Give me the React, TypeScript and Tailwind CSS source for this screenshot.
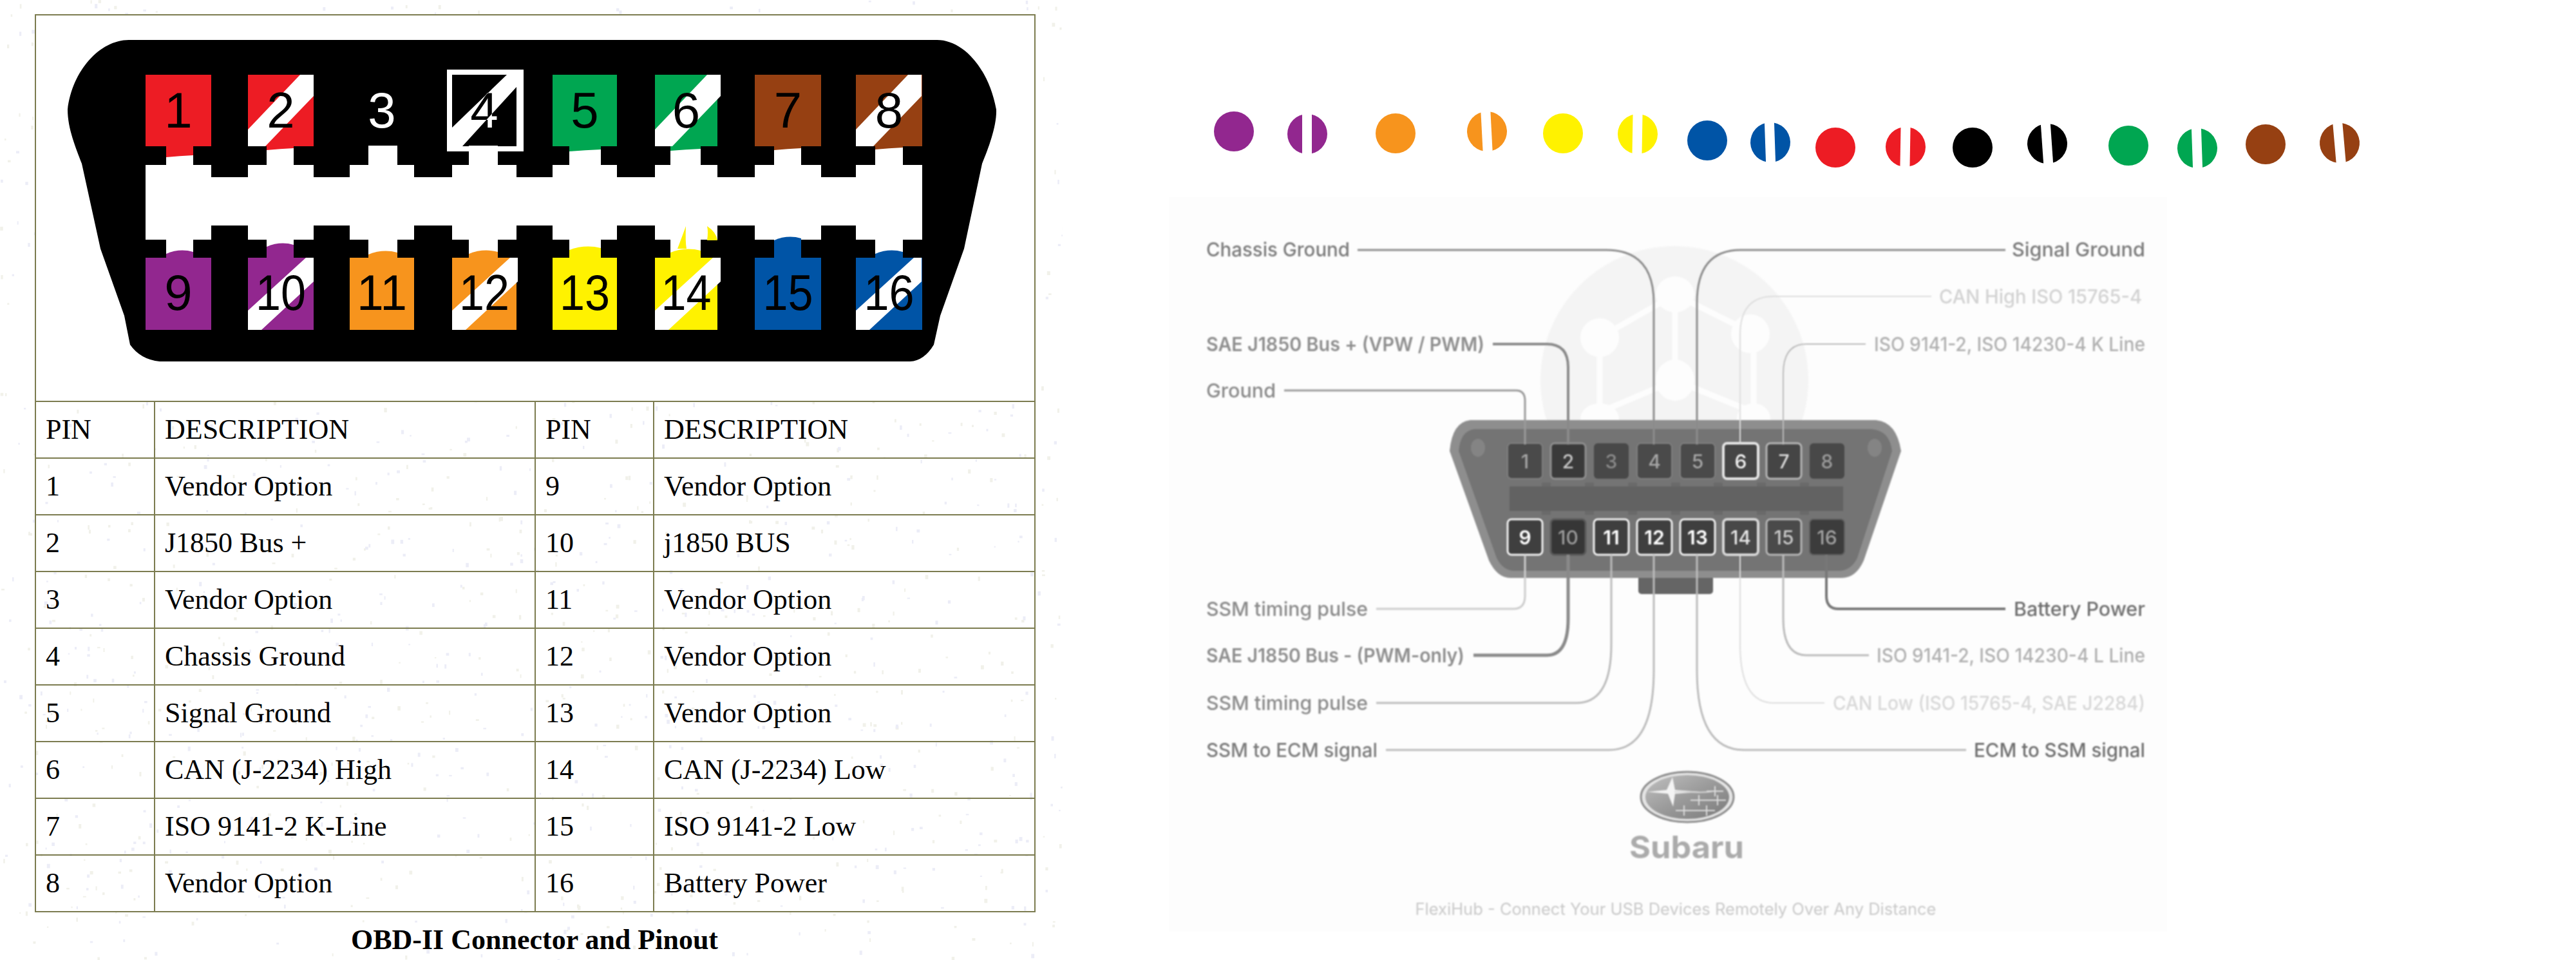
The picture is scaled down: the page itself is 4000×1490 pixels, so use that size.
import React from "react";

const LABEL_FONT = "Inter, 'Open Sans', sans-serif";

const rows = [
  ["1", "Vendor Option", "9", "Vendor Option"],
  ["2", "J1850 Bus +", "10", "j1850 BUS"],
  ["3", "Vendor Option", "11", "Vendor Option"],
  ["4", "Chassis Ground", "12", "Vendor Option"],
  ["5", "Signal Ground", "13", "Vendor Option"],
  ["6", "CAN (J-2234) High", "14", "CAN (J-2234) Low"],
  ["7", "ISO 9141-2 K-Line", "15", "ISO 9141-2 Low"],
  ["8", "Vendor Option", "16", "Battery Power"],
];

const RED = "#ed1c24";
const GREEN = "#00a651";
const BROWN = "#964012";
const PURPLE = "#92278f";
const ORANGE = "#f7941d";
const YELLOW = "#fff200";
const BLUE = "#0054a6";

// colour pins on the left connector: x from, x to, notch from, notch to
const topPins = [
  { n: "1", x0: 226, x1: 328, nx0: 258, nx1: 300, c: RED, stripe: false, fy: 244 },
  { n: "2", x0: 385, x1: 487, nx0: 414, nx1: 456, c: RED, stripe: true, fy: 233 },
  { n: "3", x0: 543, x1: 643, nx0: 572, nx1: 617, c: "", stripe: false, fy: 0 },
  { n: "4", x0: 702, x1: 802, nx0: 728, nx1: 773, c: "", stripe: false, fy: 0 },
  { n: "5", x0: 858, x1: 958, nx0: 884, nx1: 933, c: GREEN, stripe: false, fy: 235 },
  { n: "6", x0: 1017, x1: 1114, nx0: 1041, nx1: 1088, c: GREEN, stripe: true, fy: 234 },
  { n: "7", x0: 1172, x1: 1275, nx0: 1202, nx1: 1244, c: BROWN, stripe: false, fy: 233 },
  { n: "8", x0: 1329, x1: 1432, nx0: 1359, nx1: 1402, c: BROWN, stripe: true, fy: 232 },
];

const bottomPins = [
  { n: "9", x0: 226, x1: 328, nx0: 258, nx1: 300, c: PURPLE, stripe: false, fy: 388 },
  { n: "10", x0: 385, x1: 487, nx0: 414, nx1: 456, c: PURPLE, stripe: true, fy: 377 },
  { n: "11", x0: 543, x1: 643, nx0: 572, nx1: 617, c: ORANGE, stripe: false, fy: 389 },
  { n: "12", x0: 702, x1: 802, nx0: 728, nx1: 773, c: ORANGE, stripe: true, fy: 388 },
  { n: "13", x0: 858, x1: 958, nx0: 884, nx1: 933, c: YELLOW, stripe: false, fy: 382 },
  { n: "14", x0: 1017, x1: 1114, nx0: 1041, nx1: 1088, c: YELLOW, stripe: true, fy: 386 },
  { n: "15", x0: 1172, x1: 1275, nx0: 1202, nx1: 1244, c: BLUE, stripe: false, fy: 367 },
  { n: "16", x0: 1329, x1: 1432, nx0: 1359, nx1: 1402, c: BLUE, stripe: true, fy: 388 },
];

const teeth = [
  [328, 385],
  [487, 543],
  [643, 702],
  [802, 858],
  [958, 1017],
  [1114, 1172],
  [1275, 1329],
];

const dots = [
  { x: 1916, y: 204, c: PURPLE, s: false, r: 0 },
  { x: 2030, y: 208, c: PURPLE, s: true, r: 0 },
  { x: 2167, y: 207, c: ORANGE, s: false, r: 0 },
  { x: 2309, y: 204, c: ORANGE, s: true, r: -3 },
  { x: 2427, y: 207, c: YELLOW, s: false, r: 0 },
  { x: 2543, y: 208, c: YELLOW, s: true, r: 1 },
  { x: 2651, y: 218, c: BLUE, s: false, r: 0 },
  { x: 2749, y: 221, c: BLUE, s: true, r: -2 },
  { x: 2850, y: 229, c: RED, s: false, r: 0 },
  { x: 2959, y: 228, c: RED, s: true, r: 1 },
  { x: 3063, y: 229, c: "#000000", s: false, r: 0 },
  { x: 3179, y: 223, c: "#000000", s: true, r: -4 },
  { x: 3305, y: 226, c: GREEN, s: false, r: 0 },
  { x: 3412, y: 230, c: GREEN, s: true, r: -2 },
  { x: 3518, y: 224, c: BROWN, s: false, r: 0 },
  { x: 3633, y: 222, c: BROWN, s: true, r: -5 },
];

const wires = [
  { d: "M2108 388H2494Q2568 388 2568 470V690", c: "#8c8c8c", w: 3 },
  { d: "M3114 388H2703Q2635 388 2635 470V690", c: "#8c8c8c", w: 3 },
  { d: "M2999 460H2754Q2702 460 2702 520V690", c: "#dddddd", w: 2 },
  { d: "M2897 534H2805Q2769 534 2769 580V690", c: "#bbbbbb", w: 2 },
  { d: "M2318 534H2402Q2435 534 2435 570V690", c: "#8a8a8a", w: 4 },
  { d: "M1994 606H2354Q2368 606 2368 622V690", c: "#9a9a9a", w: 3 },
  { d: "M2137 945H2350Q2368 945 2368 925V861", c: "#cccccc", w: 3 },
  { d: "M2288 1017H2402Q2435 1017 2435 960V861", c: "#8a8a8a", w: 5 },
  { d: "M2137 1091H2448Q2502 1091 2502 1000V861", c: "#bbbbbb", w: 3 },
  { d: "M2152 1164H2499Q2568 1164 2568 1040V861", c: "#bbbbbb", w: 3 },
  { d: "M3114 945H2855Q2836 945 2836 925V861", c: "#777777", w: 4 },
  { d: "M2902 1017H2805Q2769 1017 2769 960V861", c: "#bbbbbb", w: 3 },
  { d: "M2833 1091H2754Q2702 1091 2702 1000V861", c: "#dddddd", w: 2 },
  { d: "M3053 1164H2708Q2635 1164 2635 1040V861", c: "#bbbbbb", w: 3 },
];

const labels = [
  { t: "Chassis Ground", x: 1873, w: 223, y: 387, c: "#7a7a7a", a: "start", b: 500 },
  { t: "Signal Ground", x: 3331, w: 207, y: 387, c: "#7a7a7a", a: "end", b: 500 },
  { t: "CAN High ISO 15765-4", x: 3326, w: 315, y: 460, c: "#d2d2d2", a: "end", b: 500 },
  { t: "SAE J1850 Bus + (VPW / PWM)", x: 1873, w: 432, y: 534, c: "#8e8e8e", a: "start", b: 600 },
  { t: "ISO 9141-2, ISO 14230-4 K Line", x: 3331, w: 421, y: 534, c: "#b0b0b0", a: "end", b: 500 },
  { t: "Ground", x: 1873, w: 108, y: 606, c: "#8a8a8a", a: "start", b: 500 },
  { t: "SSM timing pulse", x: 1873, w: 251, y: 945, c: "#8a8a8a", a: "start", b: 500 },
  { t: "SAE J1850 Bus - (PWM-only)", x: 1873, w: 401, y: 1017, c: "#8e8e8e", a: "start", b: 600 },
  { t: "SSM timing pulse", x: 1873, w: 251, y: 1091, c: "#8a8a8a", a: "start", b: 500 },
  { t: "SSM to ECM signal", x: 1873, w: 266, y: 1164, c: "#7a7a7a", a: "start", b: 500 },
  { t: "Battery Power", x: 3331, w: 204, y: 945, c: "#6e6e6e", a: "end", b: 500 },
  { t: "ISO 9141-2, ISO 14230-4 L Line", x: 3331, w: 417, y: 1017, c: "#b0b0b0", a: "end", b: 500 },
  { t: "CAN Low (ISO 15765-4, SAE J2284)", x: 3331, w: 485, y: 1091, c: "#d8d8d8", a: "end", b: 500 },
  { t: "ECM to SSM signal", x: 3331, w: 266, y: 1164, c: "#6e6e6e", a: "end", b: 500 },
];

const greyTop = [
  { n: "1", s: "#7f7f7f", t: "#a5a5a5", sw: 2, f: "#4a4a4a" },
  { n: "2", s: "#8f8f8f", t: "#c4c4c4", sw: 3, f: "#3a3a3a" },
  { n: "3", s: "none", t: "#8a8a8a", sw: 0, f: "#484848" },
  { n: "4", s: "#7f7f7f", t: "#a5a5a5", sw: 2, f: "#4a4a4a" },
  { n: "5", s: "#7f7f7f", t: "#a5a5a5", sw: 2, f: "#4a4a4a" },
  { n: "6", s: "#e6e6e6", t: "#f2f2f2", sw: 4, f: "#454545" },
  { n: "7", s: "#b5b5b5", t: "#d8d8d8", sw: 3, f: "#454545" },
  { n: "8", s: "none", t: "#9a9a9a", sw: 0, f: "#484848" },
];

const greyBottom = [
  { n: "9", s: "#f2f2f2", t: "#ffffff", sw: 3, f: "#3f3f3f" },
  { n: "10", s: "#5a5a5a", t: "#9a9a9a", sw: 3, f: "#363636" },
  { n: "11", s: "#f2f2f2", t: "#ffffff", sw: 3, f: "#3f3f3f" },
  { n: "12", s: "#f2f2f2", t: "#ffffff", sw: 3, f: "#3f3f3f" },
  { n: "13", s: "#f2f2f2", t: "#ffffff", sw: 3, f: "#3f3f3f" },
  { n: "14", s: "#d8d8d8", t: "#e6e6e6", sw: 4, f: "#484848" },
  { n: "15", s: "#b5b5b5", t: "#c8c8c8", sw: 3, f: "#4a4a4a" },
  { n: "16", s: "#5f5f5f", t: "#a0a0a0", sw: 2, f: "#3c3c3c" },
];

// fixed pseudo random specks for the paper texture behind the left table
const specks: { x: number; y: number; w: number; h: number; c: string }[] = [];
let seed = 17;
const rnd = () => {
  seed = (seed * 16807) % 2147483647;
  return seed / 2147483647;
};
for (let i = 0; i < 1500; i++) {
  specks.push({
    x: rnd() * 1650,
    y: rnd() * 1490,
    w: 2 + rnd() * 3,
    h: 2 + rnd() * 5,
    c: rnd() > 0.5 ? "#ecedf7" : "#f1f1ea",
  });
}

const PIN4_STRIPE = "787,116 802,116 802,135 718,227 702,227 702,198";

function Digit({ x, y, n, fill, clip }: { x: number; y: number; n: string; fill: string; clip?: string }) {
  return (
    <text
      x={x}
      y={y}
      textAnchor="middle"
      fontSize={78}
      fontFamily="'Liberation Sans', sans-serif"
      fill={fill}
      clipPath={clip}
      textLength={n.length > 1 ? 78 : undefined}
      lengthAdjust="spacingAndGlyphs"
    >
      {n}
    </text>
  );
}

function PinoutConnector() {
  return (
    <svg viewBox="56 24 1550 598" className="block w-[1550px] h-[598px]">
      <defs>
        <clipPath id="pin4stripe">
          <polygon points={PIN4_STRIPE} />
        </clipPath>
      </defs>
      <rect x="56" y="24" width="1550" height="598" fill="#ffffff" />
      <path
        d="M200 62H1455C1495 62 1535 105 1547 170C1548 195 1535 230 1525 254L1497 386L1460 490L1450 535Q1435 560 1413 561H248Q218 558 202 535L193 490L156 386L127 254C118 230 105 200 105 170C112 110 155 62 200 62Z"
        fill="#000000"
      />
      {/* middle slot */}
      <rect x="226" y="256" width="1206" height="116" fill="#ffffff" />
      {teeth.map(([a, b]) => (
        <g key={a}>
          <rect x={a} y="255" width={b - a} height="20" fill="#000000" />
          <rect x={a} y="350" width={b - a} height="23" fill="#000000" />
        </g>
      ))}
      {/* top row */}
      {topPins.map((p) => (
        <g key={p.n}>
          <rect x={p.nx0} y="226" width={p.nx1 - p.nx0} height="31" fill="#ffffff" />
          {p.c && (
            <>
              <rect x={p.x0} y="116" width={p.x1 - p.x0} height="111" fill={p.c} />
              <path
                d={`M${p.nx0} 227H${p.nx1}V${p.fy - 3}Q${(p.nx0 + p.nx1) / 2} ${p.fy - 2} ${p.nx0} ${p.fy}Z`}
                fill={p.c}
              />
            </>
          )}
          {p.stripe && (
            <polygon
              transform={`translate(${p.x0} 116)`}
              points="81,0 102,0 102,33 27,111 0,111 0,85"
              fill="#ffffff"
            />
          )}
        </g>
      ))}
      {/* pin 3 block stays open, pin 4 is the boxed ground */}
      <path d="M694 108H813V235H773V227H802V116H702V227H728V235H694Z" fill="#ffffff" />
      <polygon points={PIN4_STRIPE} fill="#ffffff" />
      {topPins.map((p) => (
        <Digit
          key={p.n}
          x={(p.x0 + p.x1) / 2}
          y={198}
          n={p.n}
          fill={p.n === "3" || p.n === "4" ? "#ffffff" : "#000000"}
        />
      ))}
      <Digit x={752} y={198} n="4" fill="#000000" clip="url(#pin4stripe)" />
      {/* bottom row */}
      {bottomPins.map((p) => (
        <g key={p.n}>
          <rect x={p.nx0} y="371" width={p.nx1 - p.nx0} height="30" fill="#ffffff" />
          <path
            d={`M${p.nx0} 401H${p.nx1}V${p.fy + 3}Q${(p.nx0 + p.nx1) / 2} ${p.fy - 3} ${p.nx0} ${p.fy + 6}Z`}
            fill={p.c}
          />
          <rect x={p.x0} y="400" width={p.x1 - p.x0} height="112" fill={p.c} />
          {p.stripe && (
            <polygon
              transform={`translate(${p.x0} 400)`}
              points="90,0 102,0 102,37 21,112 0,112 0,82"
              fill="#ffffff"
            />
          )}
        </g>
      ))}
      {/* flame on pin 14 */}
      <path d="M1052 386Q1060 365 1065 351Q1064 375 1066 386ZM1098 373Q1100 360 1098 351Q1112 360 1114 373Z" fill={YELLOW} />
      {bottomPins.map((p) => (
        <Digit key={p.n} x={(p.x0 + p.x1) / 2} y={481} n={p.n} fill="#000000" />
      ))}
    </svg>
  );
}

function ColorDots() {
  return (
    <svg viewBox="1815 150 1900 155" className="block w-[1900px] h-[155px]">
      {dots.map((d) => (
        <g key={`${d.x}`} transform={`rotate(${d.r} ${d.x} ${d.y})`}>
          <circle cx={d.x} cy={d.y} r={31} fill={d.c} />
          {d.s && <rect x={d.x - 8} y={d.y - 34} width={15} height={68} fill="#ffffff" />}
        </g>
      ))}
    </svg>
  );
}

function GreyPin({ x, y, p }: { x: number; y: number; p: { n: string; s: string; t: string; sw: number; f: string } }) {
  return (
    <g>
      <rect x={x - 27} y={y} width={54} height={55} rx={6} fill={p.f} stroke={p.s} strokeWidth={p.sw} />
      <text
        x={x}
        y={y + 39}
        textAnchor="middle"
        fontSize={30}
        fontWeight={p.t === "#ffffff" ? 600 : 500}
        fontFamily={LABEL_FONT}
        fill={p.t}
      >
        {p.n}
      </text>
    </g>
  );
}

function SubaruBadge() {
  const stars = [
    [2663, 1228],
    [2638, 1242],
    [2667, 1242],
    [2615, 1258],
    [2650, 1258],
  ];
  return (
    <g>
      <defs>
        <linearGradient id="badge" x1="0" y1="0" x2="1" y2="1">
          <stop offset="0" stopColor="#c0c0c0" />
          <stop offset="0.5" stopColor="#9a9a9a" />
          <stop offset="1" stopColor="#7a7a7a" />
        </linearGradient>
      </defs>
      <ellipse cx="2620" cy="1237" rx="72" ry="39" fill="#e4e4e4" stroke="#8d8d8d" strokeWidth="3" />
      <ellipse cx="2620" cy="1237" rx="65" ry="34" fill="url(#badge)" />
      <path d="M2558 1229L2588 1226L2597 1206L2601 1226L2640 1229L2601 1232L2598 1252L2590 1232Z" fill="#f4f4f4" />
      <path d="M2600 1229C2625 1228 2640 1232 2660 1228" fill="none" stroke="#d8d8d8" strokeWidth="2" />
      {stars.map(([x, y]) => (
        <path
          key={`${x}-${y}`}
          d={`M${x - 13} ${y}H${x + 13}M${x} ${y - 8}V${y + 8}`}
          stroke="#dcdcdc"
          strokeWidth="2"
        />
      ))}
      <path d="M2638 1242H2667M2615 1258H2650" stroke="#dcdcdc" strokeWidth="2" />
    </g>
  );
}

function FlexiDiagram() {
  return (
    <svg viewBox="1815 306 1550 1140" className="block w-[1550px] h-[1140px] blur-[0.8px]">
      {/* watermark */}
      <ellipse cx="2600" cy="590" rx="208" ry="208" fill="#f4f4f4" />
      <g stroke="#fdfdfd" strokeWidth="9" fill="none">
        <path d="M2601 457L2484 524V640L2601 590L2723 640V518L2601 457V590M2484 640L2601 720L2723 640" />
      </g>
      <g fill="#fdfdfd">
        <ellipse cx="2601" cy="457" rx="30" ry="28" />
        <ellipse cx="2484" cy="524" rx="30" ry="30" />
        <ellipse cx="2718" cy="518" rx="30" ry="30" />
        <ellipse cx="2601" cy="590" rx="30" ry="32" />
        <ellipse cx="2484" cy="650" rx="30" ry="24" />
        <ellipse cx="2723" cy="650" rx="26" ry="24" />
      </g>

      {/* connector body */}
      <rect x="2544" y="890" width="116" height="32" rx="5" fill="#656565" />
      <path
        d="M2283 652H2913Q2945 655 2952 700L2894 870Q2882 897 2860 897H2345Q2325 897 2312 870L2251 700Q2255 655 2283 652Z"
        fill="#8e8e8e"
      />
      <path
        d="M2290 666H2906Q2934 668 2938 700L2884 866Q2874 886 2855 886H2352Q2334 886 2324 866L2265 700Q2268 668 2290 666Z"
        fill="#747474"
      />
      <ellipse cx="2295" cy="695" rx="11" ry="14" fill="#848484" />
      <ellipse cx="2911" cy="695" rx="11" ry="14" fill="#848484" />
      <rect x="2344" y="755" width="518" height="38" fill="#626262" />
      {[2401, 2468, 2535, 2602, 2668, 2735, 2802].map((x) => (
        <g key={x} fill="#6a6a6a">
          <rect x={x - 7} y="749" width="14" height="6" />
          <rect x={x - 7} y="793" width="14" height="6" />
        </g>
      ))}

      {greyTop.map((p, i) => (
        <GreyPin key={p.n} x={2368 + i * 67} y={688} p={p} />
      ))}
      {greyBottom.map((p, i) => (
        <GreyPin key={p.n} x={2368 + i * 67} y={806} p={p} />
      ))}

      {/* wires */}
      {wires.map((w) => (
        <path key={w.d} d={w.d} fill="none" stroke={w.c} strokeWidth={w.w} />
      ))}

      {/* labels */}
      {labels.map((l) => (
        <text
          key={`${l.t}-${l.y}`}
          x={l.x}
          y={l.y + 11}
          textAnchor={l.a as "start" | "end"}
          fontSize={30}
          fontWeight={l.b}
          fontFamily={LABEL_FONT}
          fill={l.c}
          textLength={l.w}
          lengthAdjust="spacingAndGlyphs"
        >
          {l.t}
        </text>
      ))}

      <SubaruBadge />
      <text
        x="2619"
        y="1332"
        textAnchor="middle"
        fontSize={48}
        fontWeight={700}
        fontFamily={LABEL_FONT}
        fill="#ababab"
        textLength={178}
        lengthAdjust="spacingAndGlyphs"
      >
        Subaru
      </text>
      <text
        x="2602"
        y="1420"
        textAnchor="middle"
        fontSize={25}
        fontFamily={LABEL_FONT}
        fill="#c9c9c9"
        textLength={809}
        lengthAdjust="spacingAndGlyphs"
      >
        FlexiHub - Connect Your USB Devices Remotely Over Any Distance
      </text>
    </svg>
  );
}

export default function App() {
  const cell = "border-2 border-[#7c7c50] pl-[15px] align-middle h-[88px] p-0";
  return (
    <div className="flex w-[4000px] h-[1490px] bg-white overflow-hidden">
      {/* left: pinout table */}
      <div className="relative w-[1650px] h-[1490px] pl-[54px] pt-[22px] shrink-0">
        <svg className="absolute inset-0 w-[1650px] h-[1490px]" viewBox="0 0 1650 1490">
          {specks.map((s, i) => (
            <rect key={i} x={s.x} y={s.y} width={s.w} height={s.h} fill={s.c} />
          ))}
        </svg>
        <div className="relative w-[1552px] font-['Liberation_Serif',serif] text-black">
          <table className="w-[1552px] table-fixed border-collapse text-[44px] leading-none">
            <colgroup>
              <col className="w-[185px]" />
              <col className="w-[591px]" />
              <col className="w-[184px]" />
              <col className="w-[592px]" />
            </colgroup>
            <tbody>
              <tr>
                <td colSpan={4} className="border-2 border-[#7c7c50] p-0">
                  <PinoutConnector />
                </td>
              </tr>
              <tr>
                <td className={cell}>PIN</td>
                <td className={cell}>DESCRIPTION</td>
                <td className={cell}>PIN</td>
                <td className={cell}>DESCRIPTION</td>
              </tr>
              {rows.map((r) => (
                <tr key={r[0]}>
                  {r.map((c, i) => (
                    <td key={i} className={cell}>
                      {c}
                    </td>
                  ))}
                </tr>
              ))}
            </tbody>
          </table>
          <p className="mt-[18px] text-center text-[44px] leading-[50px] font-bold">OBD-II Connector and Pinout</p>
        </div>
      </div>

      {/* right: colour key and grey diagram */}
      <div className="flex flex-col pl-[165px] pt-[150px]">
        <ColorDots />
        <div className="w-[1550px] h-[1140px] bg-[#fdfdfd] mt-px">
          <FlexiDiagram />
        </div>
      </div>
    </div>
  );
}
